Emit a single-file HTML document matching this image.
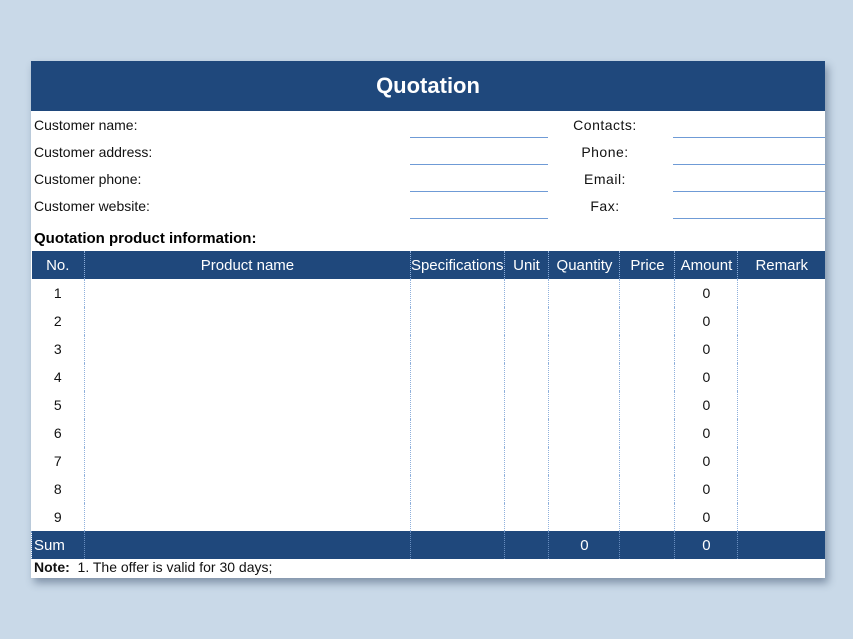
<!DOCTYPE html>
<html><head><style>
body{margin:0;width:853px;height:639px;background:#c9d9e8;position:relative;overflow:hidden;font-family:"Liberation Sans",sans-serif}
.sheet{position:absolute;left:31px;top:61px;width:794px;height:517px;background:#fff;box-shadow:3px 5px 8px rgba(40,60,90,.45)}
.a{position:absolute}
.hdr{left:0;top:0;width:794px;height:50px;background:#1f487c;color:#fff;font-weight:bold;font-size:22px;text-align:center;line-height:50px}
.lbl{font-size:14px;color:#111}
.ul{height:1px;background:#6f9bd6}
.rl{font-size:14px;color:#111;text-align:center;width:100px;letter-spacing:.5px}
table{position:absolute;left:0;top:190px;border-collapse:collapse;font-size:14px}
td{height:28px;padding:0;text-align:center;border-left:1px dotted #8fb0dc;color:#111}
tr.h td,tr.s td{background:#1f487c;color:#fff;font-size:15px}
tr.h td{height:28px}
tr.s td{border-left:1px dotted #6a8fc0}
td:first-child{border-left:none}
</style></head><body>
<div class="sheet">
<div class="a hdr">Quotation</div>
<div class="a lbl" style="left:3px;top:56px">Customer name:</div>
<div class="a lbl" style="left:3px;top:83px">Customer address:</div>
<div class="a lbl" style="left:3px;top:110px">Customer phone:</div>
<div class="a lbl" style="left:3px;top:137px">Customer website:</div>
<div class="a ul" style="left:379px;top:76px;width:138px"></div>
<div class="a ul" style="left:379px;top:103px;width:138px"></div>
<div class="a ul" style="left:379px;top:130px;width:138px"></div>
<div class="a ul" style="left:379px;top:157px;width:138px"></div>
<div class="a ul" style="left:642px;top:76px;width:152px"></div>
<div class="a ul" style="left:642px;top:103px;width:152px"></div>
<div class="a ul" style="left:642px;top:130px;width:152px"></div>
<div class="a ul" style="left:642px;top:157px;width:152px"></div>
<div class="a rl" style="left:524px;top:56px">Contacts:</div>
<div class="a rl" style="left:524px;top:83px">Phone:</div>
<div class="a rl" style="left:524px;top:110px">Email:</div>
<div class="a rl" style="left:524px;top:137px">Fax:</div>
<div class="a" style="left:3px;top:169px;font-weight:bold;font-size:15px;color:#000">Quotation product information:</div>
<table>
<colgroup><col style="width:53px"><col style="width:326px"><col style="width:92px"><col style="width:45px"><col style="width:71px"><col style="width:55px"><col style="width:63px"><col style="width:87px"></colgroup>
<tr class="h"><td>No.</td><td>Product name</td><td>Specifications</td><td>Unit</td><td>Quantity</td><td>Price</td><td>Amount</td><td>Remark</td></tr>
<tr><td>1</td><td></td><td></td><td></td><td></td><td></td><td>0</td><td></td></tr>
<tr><td>2</td><td></td><td></td><td></td><td></td><td></td><td>0</td><td></td></tr>
<tr><td>3</td><td></td><td></td><td></td><td></td><td></td><td>0</td><td></td></tr>
<tr><td>4</td><td></td><td></td><td></td><td></td><td></td><td>0</td><td></td></tr>
<tr><td>5</td><td></td><td></td><td></td><td></td><td></td><td>0</td><td></td></tr>
<tr><td>6</td><td></td><td></td><td></td><td></td><td></td><td>0</td><td></td></tr>
<tr><td>7</td><td></td><td></td><td></td><td></td><td></td><td>0</td><td></td></tr>
<tr><td>8</td><td></td><td></td><td></td><td></td><td></td><td>0</td><td></td></tr>
<tr><td>9</td><td></td><td></td><td></td><td></td><td></td><td>0</td><td></td></tr>
<tr class="s"><td style="text-align:left;padding-left:2px">Sum</td><td></td><td></td><td></td><td>0</td><td></td><td>0</td><td></td></tr>
</table>
<div class="a" style="left:3px;top:498px;font-size:14px;color:#111"><b>Note:</b>&nbsp; 1. The offer is valid for 30 days;</div>
</div>
</body></html>
